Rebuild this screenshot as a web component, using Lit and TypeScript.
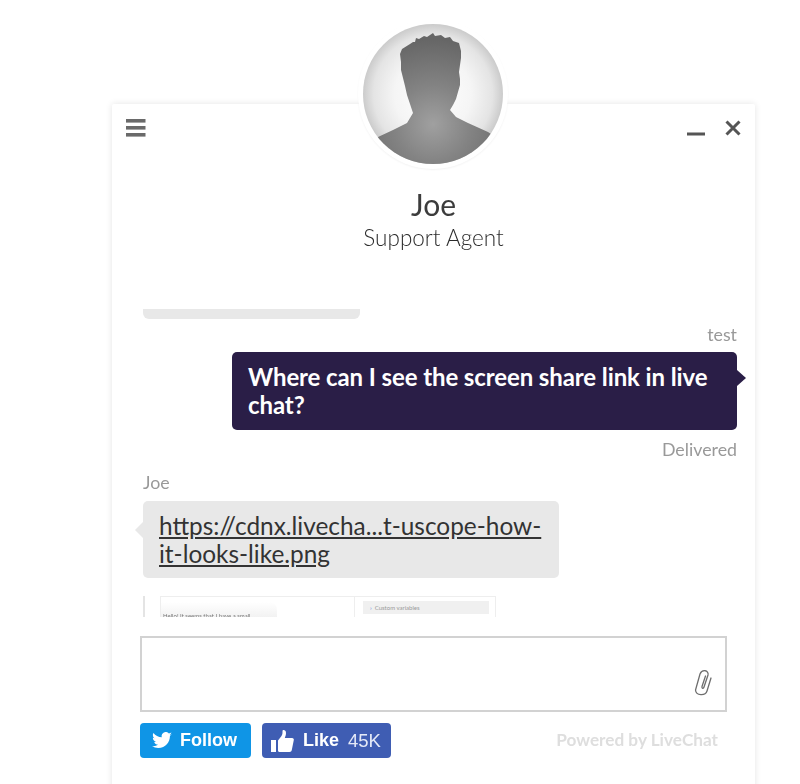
import { LitElement, html, css, svg } from "lit";
import { customElement } from "lit/decorators.js";

const silhouette = svg`
<svg class="avatar" width="140" height="140" viewBox="0 0 140 140">
  <defs>
    <radialGradient id="bg" cx="50%" cy="50%" r="50%">
      <stop offset="0%" stop-color="#ffffff"/>
      <stop offset="55%" stop-color="#f5f5f5"/>
      <stop offset="85%" stop-color="#e4e4e4"/>
      <stop offset="100%" stop-color="#cbcbcb"/>
    </radialGradient>
    <radialGradient id="fg" gradientUnits="userSpaceOnUse" cx="70" cy="100" r="85">
      <stop offset="0%" stop-color="#a0a0a0"/>
      <stop offset="45%" stop-color="#838383"/>
      <stop offset="100%" stop-color="#666666"/>
    </radialGradient>
    <clipPath id="round"><circle cx="70" cy="70" r="70"/></clipPath>
  </defs>
  <circle cx="70" cy="70" r="70" fill="url(#bg)"/>
  <path clip-path="url(#round)" fill="url(#fg)" d="M37 30 L39 25 L47 20 L50 18 L52 18 L53 14 L56 15 L61 12 L64 13 L70 9 L72 12 L78 11 L82 14 L87 13 L90 17 L96 19 L98 27 L98 34 L97 41 L96 48 L97 55 L97 61 L95 68 L93 75 L90 81 L87 86 L93 93 L105 99 L125 108 L140 118 L140 140 L0 140 L0 122 L15 113 L30 106 L44 99 L50 89 L47 80 L44 71 L42 62 L40 54 L38 46 L38 38 Z"/>
</svg>`;

@customElement("app-root")
export class AppRoot extends LitElement {
  static styles = css`
    :host {
      display: block;
      background: #fff;
      height: 784px;
      overflow: hidden;
      font-family: Lato, "Open Sans", sans-serif;
      color: #333;
    }
    .card {
      position: relative;
      margin: 104px 0 0 112px;
      width: 643px;
      height: 720px;
      background: #fff;
      border-radius: 2px;
      box-shadow: 0 0 7px rgba(0, 0, 0, 0.11);
      box-sizing: border-box;
      display: flex;
      flex-direction: column;
      filter: blur(0.5px);
    }
    .ring {
      position: absolute;
      left: 246px;
      top: -85px;
      width: 150px;
      height: 150px;
      border-radius: 50%;
      background: #fff;
      box-shadow: 0 1px 2px rgba(0, 0, 0, 0.05);
      display: flex;
      align-items: center;
      justify-content: center;
    }
    .avatar { display: block; }
    .top {
      display: flex;
      justify-content: space-between;
      align-items: flex-start;
      padding: 15px 13px 0 14px;
      height: 33px;
    }
    .menu { display: block; }
    .win { display: flex; gap: 18px; align-items: flex-start; }
    .win svg { display: block; }
    .who {
      display: flex;
      flex-direction: column;
      align-items: center;
      margin-top: 34px;
      color: #3c3c3c;
    }
    .name { font-size: 30px; line-height: 36px; }
    .role { font-size: 22.5px; line-height: 32px; font-weight: 300; color: #2c2c2c; }
    .log {
      margin: 55px 9px 0 22px;
      padding: 0 9px;
      height: 308px;
      overflow: hidden;
      display: flex;
      flex-direction: column;
      align-items: flex-start;
    }
    .stub {
      width: 217px;
      height: 10px;
      background: #e8e8e8;
      border-radius: 0 0 6px 6px;
      flex: none;
    }
    .meta {
      font-size: 17.8px;
      line-height: 18px;
      padding-bottom: 2px;
      color: #999;
      flex: none;
    }
    .right { align-self: flex-end; }
    .bubble {
      position: relative;
      box-sizing: border-box;
      line-height: 28px;
      border-radius: 5px;
      flex: none;
    }
    .out {
      align-self: flex-end;
      width: 505px;
      height: 78px;
      margin-top: 7px;
      padding: 11px 16px;
      background: #2a1e47;
      color: #fff;
      font-size: 24px;
      font-weight: 700;
      letter-spacing: -0.1px;
    }
    .out::after {
      content: "";
      position: absolute;
      left: 100%;
      top: 18px;
      border: 8px solid transparent;
      border-left: 9px solid #2a1e47;
      border-right: 0;
    }
    .in {
      width: 416px;
      height: 77px;
      margin-top: 8px;
      padding: 11px 16px;
      background: #e8e8e8;
      color: #333;
      font-size: 24.4px;
    }
    .in::before {
      content: "";
      position: absolute;
      right: 100%;
      top: 21px;
      border: 8px solid transparent;
      border-right: 8px solid #e8e8e8;
      border-left: 0;
    }
    .in a { color: #333; text-decoration: underline; }
    .thumb {
      flex: none;
      margin-top: 18px;
      width: 353px;
      height: 60px;
      display: flex;
      gap: 15px;
    }
    .edge { width: 2px; background: #e4e4e4; }
    .shot {
      flex: 1;
      display: flex;
      border: 1px solid #eee;
      box-sizing: border-box;
    }
    .pane-l {
      width: 194px;
      border-right: 1px solid #eee;
      box-sizing: border-box;
      padding-top: 5px;
    }
    .msg {
      width: 116px;
      height: 30px;
      box-sizing: border-box;
      padding: 10px 2px 0;
      border-radius: 0 8px 0 0;
      background: linear-gradient(#fff, #ededed 70%);
      font-size: 6px;
      line-height: 8px;
      white-space: nowrap;
      overflow: hidden;
      color: #777;
    }
    .pane-r { flex: 1; padding: 4px 6px 0 8px; }
    .var {
      height: 13px;
      background: #f0f0f0;
      font-size: 6px;
      line-height: 13px;
      color: #999;
      padding-left: 7px;
      white-space: nowrap;
    }
    .var b { color: #5b7fd6; font-weight: 400; margin-right: 3px; }
    .input {
      margin: 19px 0 0 28px;
      width: 587px;
      height: 76px;
      box-sizing: border-box;
      border: 2px solid #d2d2d2;
      display: flex;
      justify-content: flex-end;
      align-items: flex-end;
      padding: 0 13px 13px 0;
      flex: none;
    }
    .input svg { display: block; }
    .foot {
      display: flex;
      align-items: center;
      margin: 11px 0 0 28px;
      width: 578px;
      gap: 11px;
    }
    .btn {
      display: flex;
      align-items: center;
      height: 35px;
      box-sizing: border-box;
      border-radius: 4px;
      color: #fff;
      font-family: "Liberation Sans", Arial, sans-serif;
      font-weight: 700;
      font-size: 18px;
    }
    .tw { width: 111px; background: #0f95e6; padding-left: 12px; gap: 8px; }
    .fb { width: 129px; background: #3f5db3; padding-left: 8px; gap: 9px; }
    .fb span.n { font-weight: 400; font-size: 18.5px; color: #e4e9f7; }
    .pow {
      margin-left: auto;
      margin-bottom: 3px;
      font-size: 17.2px;
      font-weight: 700;
      color: #dedede;
    }
  `;

  render() {
    return html`
      <div class="card">
        <div class="top">
          <svg class="menu" width="20" height="19" viewBox="0 0 20 19" fill="#6a6a6a">
            <rect x="0" y="0" width="19.500" height="3.600"/>
            <rect x="0" y="7" width="19.500" height="3.600"/>
            <rect x="0" y="14" width="19.500" height="3.600"/>
          </svg>
          <div class="win">
            <svg width="19" height="18" viewBox="0 0 19 18"><rect x="0" y="13.500" width="18" height="3" fill="#555"/></svg>
            <svg width="18" height="18" viewBox="0 0 18 18"><path d="M2.500 2.500 L15.500 15.500 M15.500 2.500 L2.500 15.500" stroke="#555" stroke-width="3" fill="none"/></svg>
          </div>
        </div>
        <div class="who">
          <div class="name">Joe</div>
          <div class="role">Support Agent</div>
        </div>
        <div class="log">
          <div class="stub"></div>
          <div class="meta right" style="margin-top:6px">test</div>
          <div class="bubble out">Where can I see the screen share link in live chat?</div>
          <div class="meta right" style="margin-top:10px">Delivered</div>
          <div class="meta" style="margin-top:13px">Joe</div>
          <div class="bubble in"><a>https://cdnx.livecha...t-uscope-how-it-looks-like.png</a></div>
          <div class="thumb">
            <div class="edge"></div>
            <div class="shot">
              <div class="pane-l"><div class="msg">Hello! It seems that I have a small</div></div>
              <div class="pane-r"><div class="var"><b>›</b>Custom variables</div></div>
            </div>
          </div>
        </div>
        <div class="input">
          <svg width="18" height="28" viewBox="0 0 18 28" fill="none" stroke="#6e6e6e" stroke-width="1.300" stroke-linecap="round">
            <path d="M17 9 L13 22 C11.500 27 2 27 1.500 21 L6 5 C8 0 15 1 14 6 L10 18 C9.500 20 7.500 19.500 8 17.500 L11.500 7"/>
          </svg>
        </div>
        <div class="foot">
          <div class="btn tw">
            <svg width="20" height="17" viewBox="0 0 24 20" fill="#fff"><path d="M24 2.400c-.9.400-1.800.7-2.800.8 1-.6 1.800-1.600 2.200-2.700-1 .6-2 1-3.100 1.200A4.900 4.900 0 0 0 11.800 6.200C7.700 6 4.100 4 1.700.9c-1.300 2.200-.6 5.100 1.500 6.500-.8 0-1.500-.2-2.200-.6 0 2.300 1.600 4.400 3.900 4.900-.7.200-1.500.2-2.200.1.600 2 2.400 3.400 4.600 3.400A9.900 9.900 0 0 1 0 16.800 14 14 0 0 0 7.500 19c9.100 0 14.300-7.700 14-14.600 1-.7 1.800-1.500 2.500-2z"/></svg>
            <span>Follow</span>
          </div>
          <div class="btn fb">
            <svg width="24" height="24" viewBox="0 0 24 24" fill="#fff"><path d="M1 11h5v12H1z"/><path d="M8 11.500l3.500-4.500c1-1.500 1-3 1-5 0-1.500 3.500-1.500 3.500 2 0 2-.7 3.500-1.200 5H22c1.500 0 2 1 1.800 2l-2 10c-.2 1.200-1 2-2.300 2H10c-1 0-2-.5-2-1.500z"/></svg>
            <span>Like</span><span class="n">45K</span>
          </div>
          <div class="pow">Powered by LiveChat</div>
        </div>
        <div class="ring">${silhouette}</div>
      </div>
    `;
  }
}
